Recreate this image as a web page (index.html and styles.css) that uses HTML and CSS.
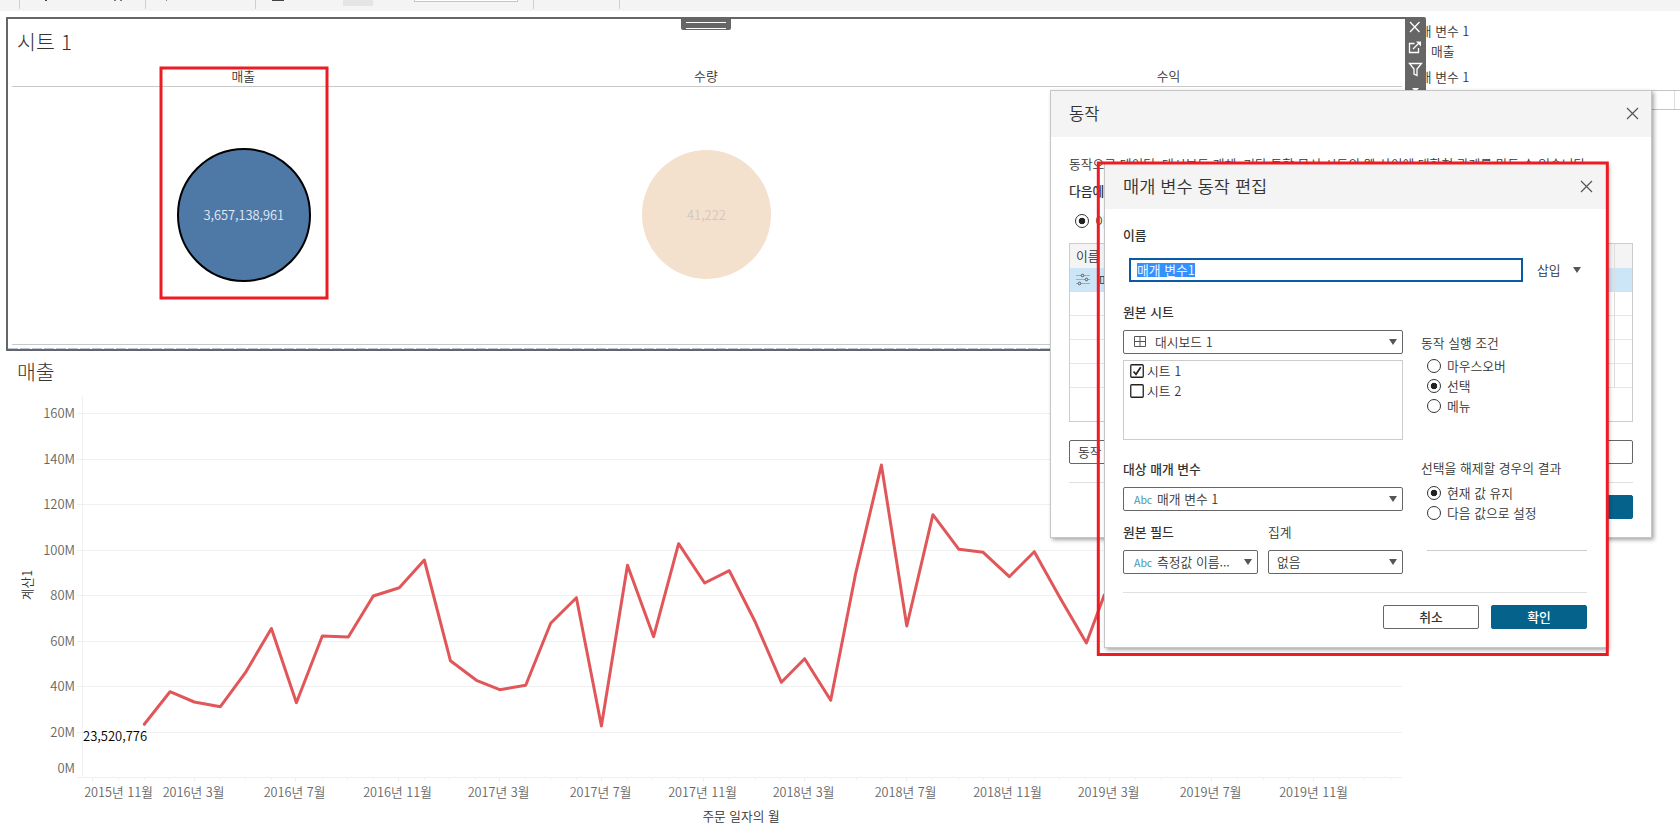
FILE: index.html
```html
<!DOCTYPE html>
<html lang="ko">
<head>
<meta charset="utf-8">
<title>대시보드 1</title>
<link rel="stylesheet" href="styles.css">
</head>
<body>
<div class="app">
  <header class="toolbar">
    <svg width="640" height="11">
      <g fill="#d0d0d0"><rect x="19" width="1" height="9"/><rect x="145" width="1" height="9"/><rect x="255" width="1" height="9"/><rect x="533" width="1" height="9"/><rect x="619" width="1" height="9"/></g>
      <g fill="#444"><rect x="45" width="2" height="1"/><rect x="114" width="2" height="1" fill="#777"/><rect x="120" width="2" height="1" fill="#777"/><rect x="166" width="1" height="1" fill="#888"/><rect x="272" width="12" height="1"/></g>
      <rect x="343" width="30" height="6" fill="#e5e5e5"/>
      <path d="M414.500 0V1.500H517.500V0" fill="#fff" stroke="#c4c4c4"/>
    </svg>
  </header>
  <div class="workspace">
    <main class="board">
      <section class="sheet">
        <h2 class="sheet-title">시트 1</h2>
        <div class="cols"><span>매출</span><span>수량</span><span>수익</span></div>
        <div class="marks">
          <div class="cell"><div class="mark mark-on">3,657,138,961</div></div>
          <div class="cell"><div class="mark mark-off">41,222</div></div>
          <div class="cell"></div>
        </div>
        <div class="dashes"></div>
        <div class="grip"></div>
        <div class="tools">
          <svg width="21" height="73" viewBox="0 0 21 73" fill="none" stroke="#fff" stroke-width="1.300">
            <path d="M5 5L14.500 15M14.500 5L5 15"/>
            <path d="M9.500 26.500H4.500V35.500H13.500V31M8 32L14.500 25.500"/><path d="M11 24.500H16V29.500Z" fill="#fff" stroke="none"/>
            <path d="M4.500 46.500H16.500L12 52V58.500L9 57V52Z"/>
            <path d="M7 71H14L10.500 75Z" fill="#fff" stroke="none"/>
          </svg>
        </div>
      </section>
      <section class="trend">
        <h2 class="trend-title">매출</h2>
        <svg class="chart" width="1405" height="443" viewBox="0 390 1405 443">
          <path class="grid" d="M77 413.500H1402M77 459.500H1402M77 504.500H1402M77 550.500H1402M77 595.500H1402M77 641.500H1402M77 686.500H1402M77 732.500H1402M77 777.500H1402M82.500 396V778"/>
          <path class="grid" d="M92.500 778v4M194.500 778v4M295.500 778v4M398.500 778v4M499.500 778v4M601.500 778v4M703.500 778v4M804.500 778v4M906.500 778v4M1008.500 778v4M1109.500 778v4M1211.500 778v4M1313.500 778v4M118.500 778v2M144.500 778v2M169.500 778v2M220.500 778v2M245.500 778v2M271.500 778v2M322.500 778v2M347.500 778v2M373.500 778v2M424.500 778v2M449.500 778v2M475.500 778v2M525.500 778v2M550.500 778v2M576.500 778v2M627.500 778v2M652.500 778v2M678.500 778v2M729.500 778v2M755.500 778v2M780.500 778v2M830.500 778v2M856.500 778v2M881.500 778v2M932.500 778v2M958.500 778v2M983.500 778v2M1034.500 778v2M1059.500 778v2M1085.500 778v2M1135.500 778v2M1161.500 778v2M1186.500 778v2M1237.500 778v2M1263.500 778v2M1288.500 778v2M1339.500 778v2M1364.500 778v2M1390.500 778v2"/>
          <polyline class="line" points="144.300,724.300 170,691.700 194.300,702 220.400,706.700 245.400,672.700 271.400,628.500 296.400,702.700 322.300,636 348.300,637 373.300,596 399.300,587.700 424.300,560 450.400,660.700 476.400,680.300 499.700,689.700 525.700,685.300 550.700,623.300 576.400,597.700 601.400,726 627.500,565.300 653.600,636.700 678.600,543.700 704.600,583 729.300,570.700 755.400,622.300 781.400,682.300 804.600,658.700 830.700,700.300 855.700,573.300 881.400,465 906.800,626 932.900,514.700 958.900,549.300 983.200,552.300 1009.300,576.700 1034.300,551.700 1060.700,599 1086.400,643 1104.300,595"/>
          <g class="ylab"><text x="75" y="418">160M</text><text x="75" y="464">140M</text><text x="75" y="509">120M</text><text x="75" y="555">100M</text><text x="75" y="600">80M</text><text x="75" y="646">60M</text><text x="75" y="691">40M</text><text x="75" y="737">20M</text><text x="75" y="773">0M</text></g>
          <g class="xlab"><text x="118.500" y="797">2015년 11월</text><text x="193.500" y="797">2016년 3월</text><text x="294.500" y="797">2016년 7월</text><text x="397.500" y="797">2016년 11월</text><text x="498.500" y="797">2017년 3월</text><text x="600.500" y="797">2017년 7월</text><text x="702.500" y="797">2017년 11월</text><text x="803.500" y="797">2018년 3월</text><text x="905.500" y="797">2018년 7월</text><text x="1007.500" y="797">2018년 11월</text><text x="1108.500" y="797">2019년 3월</text><text x="1210.500" y="797">2019년 7월</text><text x="1313.500" y="797">2019년 11월</text></g>
          <text class="dlab" x="83" y="741">23,520,776</text>
          <text class="ttl" x="741" y="821">주문 일자의 월</text>
          <text class="ttl" transform="translate(32 585) rotate(-90)">계산1</text>
        </svg>
      </section>
    </main>
    <aside class="params">
      <div class="p-name">매개 변수 1</div>
      <div class="p-value">매출</div>
      <div class="p-name">매개 변수 1</div>
      <div class="p-box"></div>
    </aside>
  </div>
</div>

<div class="dialog actions">
  <div class="head"><span>동작</span><svg class="x" width="13" height="13"><path d="M1 1L12 12M12 1L1 12"/></svg></div>
  <div class="actions-body">
    <p class="desc">동작으로 데이터, 대시보드 개체, 기타 통합 문서 시트의 웹 사이에 대화형 관계를 만들 수 있습니다.</p>
    <p class="scope">다음에</p>
    <label class="opt"><i class="radio on"></i>이</label>
    <div class="table">
      <div class="tr th"><span>이름</span><b></b></div>
      <div class="tr sel"><svg width="15" height="15" fill="#cde6f7" stroke="#555"><path stroke="#aaa" d="M0 3.500H14M0 7.500H14M0 11.500H14"/><circle cx="6.500" cy="3.500" r="1.300"/><circle cx="10.500" cy="7.500" r="1.300"/><circle cx="3.500" cy="11.500" r="1.300"/></svg><span>매</span><b></b></div>
      <div class="tr"><b></b></div><div class="tr"><b></b></div><div class="tr"><b></b></div><div class="tr"><b></b></div>
    </div>
    <div class="add">동작</div>
    <div class="foot"><span class="btn primary"></span></div>
  </div>
</div>

<div class="dialog edit">
  <div class="head"><span>매개 변수 동작 편집</span><svg class="x" width="13" height="13"><path d="M1 1L12 12M12 1L1 12"/></svg></div>
  <div class="edit-body">
    <div class="lab strong name-lab">이름</div>
    <div class="name-row"><div class="input"><mark>매개 변수1</mark></div><span>삽입</span><i class="arrow"></i></div>
    <div class="form">
      <div class="left">
        <div class="lab strong">원본 시트</div>
        <div class="select"><svg class="gi" width="12" height="12"><path d="M.5 .5H11.500V10.500H.5ZM6 .5V10.500M.5 5.500H11.500"/></svg><span class="g1">대시보드 1</span><i class="arrow"></i></div>
        <div class="list">
          <label><svg width="14" height="14"><rect x=".75" y=".75" width="12.500" height="12.500" rx="1"/><path d="M3.500 7.500L6 10.300L10.700 3.300" stroke-width="1.700"/></svg>시트 1</label>
          <label><svg width="14" height="14"><rect x=".75" y=".75" width="12.500" height="12.500" rx="1"/></svg>시트 2</label>
        </div>
        <div class="lab strong target">대상 매개 변수</div>
        <div class="select"><em>Abc</em><span>매개 변수 1</span><i class="arrow"></i></div>
        <div class="pair">
          <div><div class="lab strong">원본 필드</div><div class="select"><em>Abc</em><span>측정값 이름...</span><i class="arrow"></i></div></div>
          <div><div class="lab">집계</div><div class="select"><span>없음</span><i class="arrow"></i></div></div>
        </div>
      </div>
      <div class="right">
        <div class="lab run">동작 실행 조건</div>
        <label class="opt"><i class="radio"></i>마우스오버</label>
        <label class="opt"><i class="radio on"></i>선택</label>
        <label class="opt"><i class="radio"></i>메뉴</label>
        <div class="lab clear">선택을 해제할 경우의 결과</div>
        <label class="opt"><i class="radio on"></i>현재 값 유지</label>
        <label class="opt"><i class="radio"></i>다음 값으로 설정</label>
        <div class="rule"></div>
      </div>
    </div>
    <div class="buttons"><span class="btn">취소</span><span class="btn primary">확인</span></div>
  </div>
</div>

<svg class="callouts" width="1680" height="833" fill="none" stroke="#ed1c24" stroke-width="3">
  <rect x="161" y="68" width="166" height="230"/>
  <rect x="1098.300" y="163" width="509" height="491.500"/>
</svg>
</body>
</html>
```
FILE: styles.css
```css
* { box-sizing: border-box; margin: 0; padding: 0; }
body {
  width: 1680px; height: 833px; overflow: hidden; position: relative;
  background: #fff; color: #333;
  font: 350 12.8px/20px "Noto Sans CJK KR", "Noto Sans CJK SC", sans-serif;
  white-space: nowrap;
}
svg { display: block; }
.app { display: flex; flex-direction: column; height: 833px; }
.toolbar { height: 11px; background: #f4f4f4; }
.workspace { display: flex; flex: 1; padding: 6px 0 0 6px; }
.board { width: 1399px; flex: none; }

.sheet {
  position: relative; width: 1400px; height: 334px;
  border: 2px solid #666; border-right: 0; padding: 0 4px;
}
.sheet-title, .trend-title { font-size: 20.5px; font-weight: 300; line-height: 28px; }
.sheet-title { padding: 8px 0 0 5px; height: 48px; letter-spacing: .2px; }
.cols { display: grid; grid-template-columns: repeat(3, 462.600px); height: 20px; border-bottom: 1px solid #c8c8c8; text-align: center; line-height: 18px; }
.marks { display: grid; grid-template-columns: repeat(3, 462.600px); height: 258px; border-bottom: 1px solid #c8c8c8; width: 1389px; }
.cell { display: flex; justify-content: center; align-items: center; padding: 0 0 2px 1px; }
.mark { border-radius: 50%; display: flex; align-items: center; justify-content: center; font-size: 12.800px; }
.mark-on { width: 134px; height: 134px; background: #4e79a7; border: 2.500px solid #000; color: #e6edf4; }
.mark-off { width: 129px; height: 129px; background: #f3e0cd; color: #cfc8c0; }
.dashes { height: 1px; margin: 3px -4px 0; background: repeating-linear-gradient(90deg, #bcc6dc 0 10px, #fff 10px 12px); }
.grip { position: absolute; left: 673px; top: 0; width: 50px; height: 11px; background: #666; border-radius: 0 0 2px 2px; }
.grip::before { content: ""; display: block; margin: 3px 5px 0; height: 5px; border: solid #fff; border-width: 1px 0; }
.tools { position: absolute; left: 1397px; top: -2px; width: 21px; height: 75px; background: #666; border-top-right-radius: 2px; }

.trend-title { padding: 6px 0 0 11px; height: 39px; }
.chart { margin-left: -6px; font-size: 12.700px; }
.grid { stroke: #f0f0f0; fill: none; }
.line { stroke: #e15759; stroke-width: 3; fill: none; stroke-linejoin: round; stroke-linecap: round; }
.ylab { fill: #666; text-anchor: end; font-size: 13px; }
.xlab { fill: #666; text-anchor: middle; }
.ttl { fill: #333; text-anchor: middle; }
.dlab { fill: #000; font-size: 13px; }

.params { flex: 1; padding: 4px 0 0 3px; }
.p-value { padding: 0 0 6px 23px; }
.p-box { margin-top: 3px; border: solid #c4c4c4; border-width: 1px 0; height: 20px; display: flex; justify-content: flex-end; }
.p-box::after { content: ""; width: 5px; border-left: 1px solid #ddd; }

.dialog { position: absolute; background: #fff; border: 1px solid #c6c6c6; box-shadow: 2px 2px 4px rgba(0, 0, 0, .35); overflow: hidden; }
.head { height: 46px; background: #f4f4f4; display: flex; align-items: center; justify-content: space-between; font-size: 17.600px; }
.x { stroke: #555; stroke-width: 1.200; fill: none; }
.radio { display: inline-block; flex: none; width: 14px; height: 14px; border: 1px solid #333; border-radius: 50%; background: #fff; }
.radio.on { background: radial-gradient(circle, #222 0 2.900px, #fff 3.600px); }
.opt { display: flex; align-items: center; gap: 6px; height: 20px; }
.arrow { width: 0; height: 0; border: 4px solid transparent; border-top: 6px solid #555; border-bottom: 0; }
.btn { width: 96px; height: 24px; border: 1px solid #666; border-radius: 2px; text-align: center; line-height: 22px; font-weight: 500; }
.primary { background: #05628a; border-color: #05628a; color: #fff; }

.actions { left: 1050px; top: 90px; width: 602px; height: 448px; }
.actions .head { padding: 0 12px 2px 18px; font-size: 16.500px; }
.actions-body { padding: 17px 18px 0; }
.desc { font-size: 12.800px; height: 19px; }
.scope { margin-top: 8px; font-weight: 500; }
.actions .opt { margin: 10px 0 0 6px; }
.table { margin-top: 12px; height: 179px; border: 1px solid #ccc; }
.tr { height: 24px; border-bottom: 1px solid #e6e6e6; display: flex; align-items: center; padding-left: 6px; gap: 8px; }
.tr b { margin-left: auto; width: 18px; height: 24px; border-left: 1px solid #ddd; }
.th { background: #f4f4f4; border-color: #f4f4f4; }
.sel { background: #cde6f7; border-color: #cde6f7; }
.add { margin-top: 18px; height: 24px; border: 1px solid #666; border-radius: 2px; padding-left: 8px; line-height: 22px; }
.foot { margin-top: 18px; border-top: 1px solid #e0e0e0; padding-top: 12px; display: flex; justify-content: flex-end; }

.edit { left: 1104px; top: 163px; width: 503px; height: 485px; }
.edit .head { padding: 0 13px 1px 18px; height: 45px; }
.edit-body { padding: 16px 19px 0 18px; }
.lab { height: 20px; }
.strong { font-weight: 500; }
.name-row { display: flex; align-items: center; margin: 13px 0 0 6px; height: 24px; }
.input { width: 394px; height: 24px; border: 2px solid #0a5aa8; padding: 0 6px; line-height: 19px; margin-right: 14px; }
mark { display: inline-block; height: 14px; line-height: 13px; background: #3390ff; color: #fff; }
.name-row .arrow { margin-left: 12px; }
.form { display: flex; margin-top: 19px; height: 292px; border-bottom: 1px solid #e0e0e0; }
.left { width: 280px; flex: none; padding-top: 1px; }
.left .lab { margin-bottom: 8px; line-height: 19px; }
.select { height: 24px; border: 1px solid #666; border-radius: 2px; display: flex; align-items: center; padding: 0 5px 0 10px; }
.select .arrow { margin-left: auto; }
.select em { font: 10.500px "Noto Sans CJK KR", sans-serif; color: #4996b2; width: 23px; }
.gi { stroke: #555; fill: none; margin-right: 9px; }
.list { margin-top: 6px; height: 80px; border: 1px solid #ccc; padding: 0 6px; }
.list label { display: flex; align-items: center; gap: 3px; height: 20px; }
.list svg { fill: #fff; stroke: #222; stroke-width: 1.300; }
.left .target { margin-top: 19px; }
.pair { display: grid; grid-template-columns: 135px 135px; gap: 10px; margin-top: 11px; }
.pair .select { padding-left: 10px; }
.pair > div:last-child .select { padding-left: 8px; }
.right { margin-left: 18px; width: 166px; }
.run { margin-top: 32px; }
.right .opt { padding-left: 6px; }
.right .run { margin-bottom: 3px; }
.clear { margin: 42px 0 5px; }
.rule { margin: 27px 0 0 6px; border-top: 1px solid #ccc; }
.buttons { display: flex; justify-content: flex-end; gap: 12px; margin-top: 12px; }
.callouts { position: absolute; left: 0; top: 0; }
```
